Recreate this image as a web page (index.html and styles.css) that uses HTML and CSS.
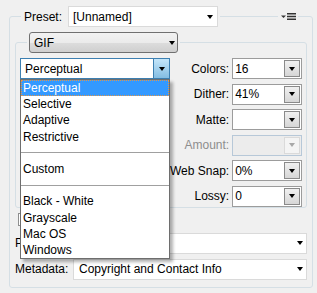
FILE: index.html
```html
<!DOCTYPE html>
<html lang="en">
  <head>
    <meta charset="UTF-8" />
    <title>Save for Web - Optimize</title>
    <link rel="stylesheet" href="styles.css">
  </head>
  <body>
    <fieldset class="panel">
      <legend class="panel-head">
        <span class="label">Preset:</span>
        <span class="combo preset"><span>[Unnamed]</span><span class="caret"></span></span>
        <span class="rule"></span>
        <svg class="menu-icon" width="15" height="7" viewBox="0 0 15 7">
          <path d="M0 2.5h5L2.5 5z" fill="#333" />
          <path d="M6 0h9v1.5H6zM6 2.75h9v1.5H6zM6 5.5h9V7H6z" fill="#333" />
        </svg>
      </legend>

      <fieldset class="group">
        <legend class="group-head">
          <span class="format-btn"><span>GIF</span><span class="caret"></span></span>
        </legend>

        <div class="settings">
          <div class="reduction">
            <div class="combo focus">
              <span>Perceptual</span>
              <span class="drop-btn"><span class="caret"></span></span>
            </div>
            <ul class="menu">
              <li class="selected">Perceptual</li>
              <li>Selective</li>
              <li>Adaptive</li>
              <li>Restrictive</li>
              <li class="sep"></li>
              <li>Custom</li>
              <li class="sep"></li>
              <li>Black - White</li>
              <li>Grayscale</li>
              <li>Mac OS</li>
              <li>Windows</li>
            </ul>
          </div>

          <div class="options">
            <span class="opt-label">Colors:</span>
            <span class="field"><span>16</span><span class="spin"><span class="caret"></span></span></span>
            <span class="opt-label">Dither:</span>
            <span class="field"><span>41%</span><span class="spin"><span class="caret"></span></span></span>
            <span class="opt-label">Matte:</span>
            <span class="field"><span></span><span class="spin"><span class="caret"></span></span></span>
            <span class="opt-label disabled">Amount:</span>
            <span class="field disabled"><span></span><span class="spin"><span class="caret"></span></span></span>
            <span class="opt-label">Web Snap:</span>
            <span class="field"><span>0%</span><span class="spin"><span class="caret"></span></span></span>
            <span class="opt-label">Lossy:</span>
            <span class="field"><span>0</span><span class="spin"><span class="caret"></span></span></span>
          </div>
        </div>
      </fieldset>

      <div class="check-row">
        <span class="checkbox"></span>
        <span>Convert to sRGB</span>
      </div>
      <div class="row preview-row">
        <span class="label">Preview:</span>
        <span class="combo wide"><span>Monitor Color</span><span class="caret"></span></span>
      </div>
      <div class="row">
        <span class="label">Metadata:</span>
        <span class="combo wide"><span>Copyright and Contact Info</span><span class="caret"></span></span>
      </div>
    </fieldset>
  </body>
</html>
```

FILE: styles.css
```css
body {
  margin: 0;
  padding: 6px 0 0 9px;
  background-color: #f0f0f0;
  font-family: "Liberation Sans", Arial, sans-serif;
  font-size: 12px;
  color: #000;
}
.panel {
  width: 290px;
  margin: 0;
  padding: 5px 5px 7px 5px;
  border: 1px solid #d5dfe5;
  border-radius: 3px;
}
.panel-head {
  display: flex;
  align-items: center;
  width: 277px;
  box-sizing: border-box;
  margin-left: 6px;
  padding: 0 2px 0 3px;
}
.label {
  white-space: nowrap;
}
.combo {
  display: flex;
  align-items: center;
  justify-content: space-between;
  height: 21px;
  box-sizing: border-box;
  border: 1px solid #dadada;
  background-color: #fff;
  padding: 0 4px 0 4px;
  white-space: nowrap;
  overflow: hidden;
}
.preset {
  width: 150px;
  margin-left: 6px;
}
.rule {
  flex: 1;
  height: 1px;
  background-color: #d5dfe5;
  margin: 0 3px 0 2px;
}
.menu-icon {
  display: block;
}
.caret {
  display: block;
  width: 0;
  height: 0;
  border-left: 3.5px solid transparent;
  border-right: 3.5px solid transparent;
  border-top: 4px solid #000;
}
.group {
  margin: 0;
  padding: 5px 4px 0 4px;
  border: 1px solid #d5dfe5;
  border-radius: 3px;
}
.group-head {
  margin-left: 7px;
  padding: 0 2px;
}
.format-btn {
  display: flex;
  align-items: center;
  justify-content: space-between;
  width: 149px;
  height: 21px;
  box-sizing: border-box;
  padding: 0 2px 0 4px;
  border: 1px solid #707070;
  border-radius: 3px;
  background: linear-gradient(#f2f2f2 0, #ebebeb 50%, #dddddd 50%, #cfcfcf 100%);
}
.settings {
  display: grid;
  grid-template-columns: 150px 1fr;
}
.reduction {
  position: relative;
}
.combo.focus {
  border-color: #3c7fb1;
  padding: 0 0 0 4px;
}
.drop-btn {
  display: flex;
  align-items: center;
  justify-content: center;
  width: 15px;
  align-self: stretch;
  border-left: 1px solid #3c7fb1;
  background: linear-gradient(#c4e6fa, #84bde2);
}
.menu {
  position: absolute;
  top: 21px;
  left: 0;
  width: 150px;
  box-sizing: border-box;
  margin: 0;
  padding: 0;
  list-style: none;
  background-color: #fff;
  border: 1px solid #6e6e6e;
  box-shadow: 3px 3px 3px rgba(0, 0, 0, 0.3);
}
.menu li {
  height: 16.2px;
  line-height: 16.2px;
  padding-left: 2px;
}
.menu li.selected {
  background-color: #3399ff;
  color: #fff;
  outline: 1px dotted #e0964a;
  outline-offset: -1px;
}
.menu li.sep {
  display: flex;
  align-items: center;
  padding: 0;
}
.menu li.sep::before {
  content: "";
  flex: 1;
  height: 1px;
  background-color: #a0a0a0;
}
.options {
  display: grid;
  grid-template-columns: 1fr 70px;
  column-gap: 3px;
  row-gap: 4.6px;
  align-items: center;
}
.opt-label {
  justify-self: end;
  white-space: nowrap;
}
.opt-label.disabled {
  color: #8d8d8d;
}
.field {
  display: flex;
  align-items: center;
  justify-content: space-between;
  height: 21px;
  box-sizing: border-box;
  padding-left: 2px;
  border: 1px solid #9c9c9c;
  background-color: #fff;
}
.spin {
  display: flex;
  align-items: center;
  justify-content: center;
  width: 16px;
  align-self: stretch;
  margin: 1px;
  box-sizing: border-box;
  border: 1px solid #8a8a8a;
  background: linear-gradient(#f0f0f0, #d6d6d6);
}
.field.disabled {
  border-color: #b7c8d8;
  background-color: #ececec;
}
.field.disabled .spin {
  border-color: #dadada;
  background: #f4f4f4;
}
.field.disabled .caret {
  border-top-color: #a8a8a8;
}
.check-row {
  display: flex;
  align-items: center;
  gap: 5px;
  height: 14px;
  margin-top: 5px;
}
.checkbox {
  width: 13px;
  height: 13px;
  box-sizing: border-box;
  margin-left: 3px;
  border: 1px solid #8f8f8f;
  background-color: #fff;
}
.row {
  display: grid;
  grid-template-columns: 58px 1fr;
  align-items: center;
  margin-top: 5px;
}
.preview-row {
  margin-top: 6px;
}
.combo.wide {
  padding: 0 3px 0 5px;
}
```
